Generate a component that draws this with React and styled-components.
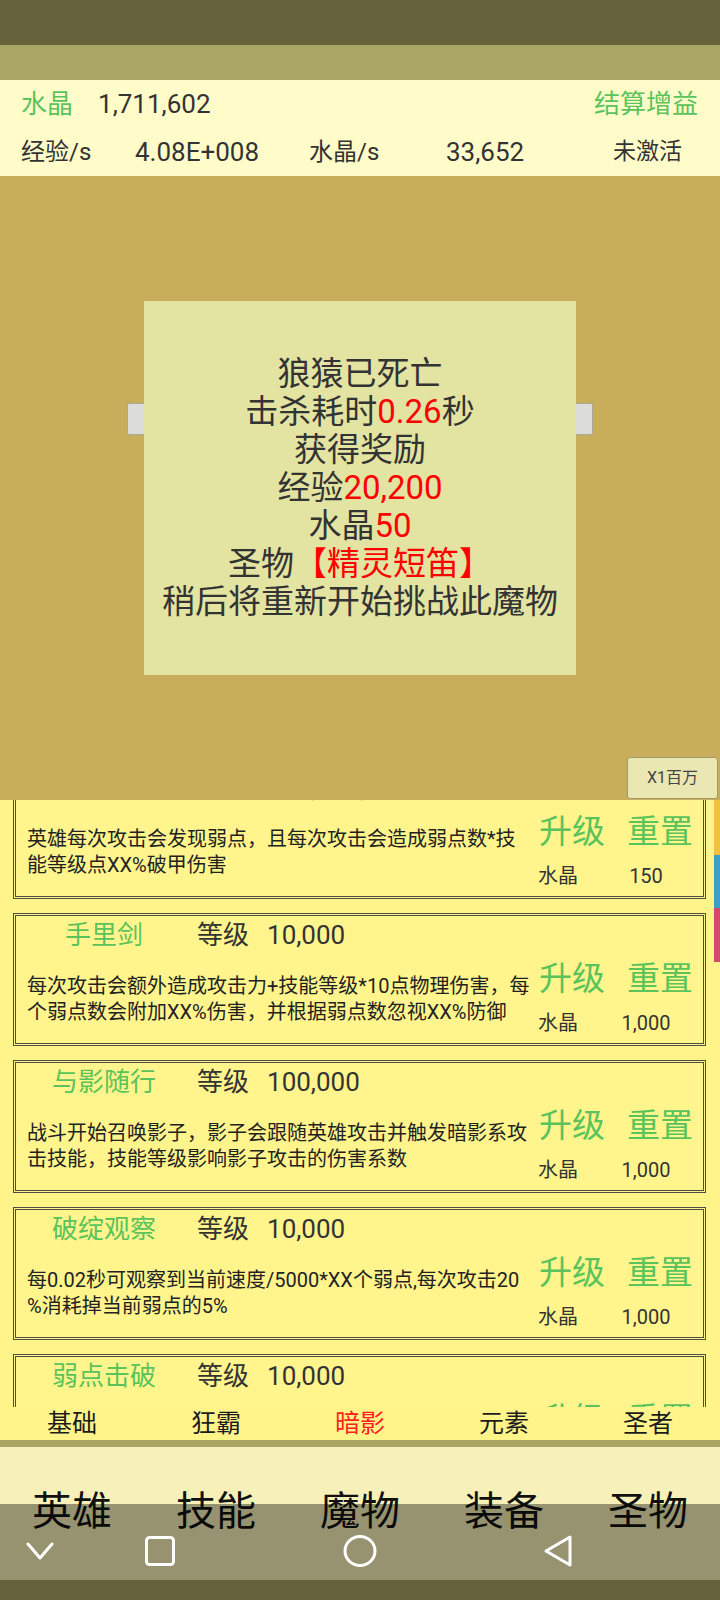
import React from "react";
import styled, { createGlobalStyle } from "styled-components";

const GlobalStyle = createGlobalStyle`
  html, body {
    margin: 0;
    padding: 0;
    background: #66633c;
  }
  body {
    font-family: Roboto, "Noto Sans CJK SC", sans-serif;
  }
  #root {
    width: 720px;
  }
`;

const skills = [
  {
    name: "弱点发现",
    level: "100,000,000",
    desc: ["英雄每次攻击会发现弱点，且每次攻击会造成弱点数*技", "能等级点XX%破甲伤害"],
    cost: "150",
  },
  {
    name: "手里剑",
    level: "10,000",
    desc: ["每次攻击会额外造成攻击力+技能等级*10点物理伤害，每", "个弱点数会附加XX%伤害，并根据弱点数忽视XX%防御"],
    cost: "1,000",
  },
  {
    name: "与影随行",
    level: "100,000",
    desc: ["战斗开始召唤影子，影子会跟随英雄攻击并触发暗影系攻", "击技能，技能等级影响影子攻击的伤害系数"],
    cost: "1,000",
  },
  {
    name: "破绽观察",
    level: "10,000",
    desc: ["每0.02秒可观察到当前速度/5000*XX个弱点,每次攻击20", "%消耗掉当前弱点的5%"],
    cost: "1,000",
  },
  {
    name: "弱点击破",
    level: "10,000",
    desc: ["弱点数达到上限时，下一次攻击会击破所有弱点，造成", "弱点数*XX%的额外伤害"],
    cost: "1,000",
  },
];

const subTabs = ["基础", "狂霸", "暗影", "元素", "圣者"];
const mainTabs = ["英雄", "技能", "魔物", "装备", "圣物"];

const App = () => {
  return (
    <Page>
      <GlobalStyle />
      <StatusBar />
      <AppBar />
      <InfoPanel>
        <InfoRow>
          <Green>水晶</Green>
          <Value>1,711,602</Value>
          <Green $right>结算增益</Green>
        </InfoRow>
        <RateRow>
          <RateText $size={24}>经验/s</RateText>
          <RateText $size={26}>4.08E+008</RateText>
          <RateText $size={24}>水晶/s</RateText>
          <RateText $size={26}>33,652</RateText>
          <RateText $size={23}>未激活</RateText>
        </RateRow>
      </InfoPanel>

      <Scene>
        <BattleBar />
        <Dialog>
          <DialogLine>狼猿已死亡</DialogLine>
          <DialogLine>击杀耗时<Red>0.26</Red>秒</DialogLine>
          <DialogLine>获得奖励</DialogLine>
          <DialogLine>经验<Red>20,200</Red></DialogLine>
          <DialogLine>水晶<Red>50</Red></DialogLine>
          <DialogLine>圣物<Red>【精灵短笛】</Red></DialogLine>
          <DialogLine>稍后将重新开始挑战此魔物</DialogLine>
        </Dialog>
        <SpeedButton>X1百万</SpeedButton>
      </Scene>

      <SkillArea>
        <CardColumn>
          {skills.map((s) => (
            <Card key={s.name}>
              <LeftCol>
                <NameRow>
                  <SkillName>{s.name}</SkillName>
                  <LevelLabel>等级</LevelLabel>
                  <LevelValue>{s.level}</LevelValue>
                </NameRow>
                <Desc>
                  {s.desc.map((line) => (
                    <div key={line}>{line}</div>
                  ))}
                </Desc>
              </LeftCol>
              <RightCol>
                <ActionRow>
                  <Action>升级</Action>
                  <Action>重置</Action>
                </ActionRow>
                <CostRow>
                  <span>水晶</span>
                  <CostValue>{s.cost}</CostValue>
                </CostRow>
              </RightCol>
            </Card>
          ))}
        </CardColumn>
        <SideStrip>
          <StripPart $h={55} $color="#f6be3e" />
          <StripPart $h={53} $color="#3c9fc9" />
          <StripPart $h={54} $color="#d2496b" />
        </SideStrip>
      </SkillArea>

      <SubTabBar>
        {subTabs.map((t) => (
          <SubTab key={t} $active={t === "暗影"}>{t}</SubTab>
        ))}
      </SubTabBar>
      <Divider />

      <BottomNav>
        <MainTabs>
          {mainTabs.map((t) => (
            <MainTab key={t}>{t}</MainTab>
          ))}
        </MainTabs>
        <SystemNav>
          <NavIcons>
            <NavIcon $offset={26} width="28" height="18" viewBox="0 0 28 18">
              <path d="M2 2 L14 16 L26 2" />
            </NavIcon>
            <NavIcon $offset={91} width="30" height="30" viewBox="0 0 30 30">
              <rect x="1.5" y="1.5" width="27" height="27" rx="3" />
            </NavIcon>
            <NavIcon $offset={168} width="34" height="32" viewBox="0 0 34 32">
              <ellipse cx="17" cy="16" rx="15" ry="14.5" />
            </NavIcon>
            <NavIcon $offset={166} width="30" height="34" viewBox="0 0 30 34">
              <path d="M27 3 L3 17 L27 31 Z" />
            </NavIcon>
          </NavIcons>
          <NavFloor />
        </SystemNav>
      </BottomNav>
    </Page>
  );
};

export default App;

const Page = styled.div`
  width: 720px;
  height: 1600px;
  overflow: hidden;
  display: flex;
  flex-direction: column;
  color: #333;
`;

const StatusBar = styled.div`
  height: 45px;
  flex-shrink: 0;
  background: #66633c;
`;

const AppBar = styled.div`
  height: 35px;
  flex-shrink: 0;
  background: #a9a665;
`;

const InfoPanel = styled.div`
  height: 96px;
  flex-shrink: 0;
  background: #fffcc9;
  font-size: 26px;
  line-height: 32px;
`;

const InfoRow = styled.div`
  height: 48px;
  display: flex;
  align-items: center;
  padding: 0 22px 0 21px;
`;

const Green = styled.span`
  color: #5bc35b;
  margin-left: ${(p) => (p.$right ? "auto" : "0")};
`;

const Value = styled.span`
  margin-left: 25px;
  color: #333;
`;

const RateRow = styled.div`
  height: 48px;
  display: grid;
  grid-template-columns: 114px 174px 137px 167px 1fr;
  align-items: center;
  padding-left: 21px;
`;

const RateText = styled.span`
  font-size: ${(p) => p.$size}px;
  line-height: 32px;
`;

const Scene = styled.div`
  position: relative;
  height: 624px;
  flex-shrink: 0;
  background: #c8ad5a;
  display: flex;
  flex-direction: column;
`;

const BattleBar = styled.div`
  box-sizing: border-box;
  margin: 227px 0 0 127px;
  width: 466px;
  height: 32px;
  background: #dcdcd8;
  border: 1px solid #a9a89c;
  border-radius: 2px;
`;

const Dialog = styled.div`
  position: absolute;
  left: 144px;
  top: 125px;
  width: 432px;
  height: 374px;
  background: #e3e3a2;
  display: flex;
  flex-direction: column;
  align-items: center;
  justify-content: center;
`;

const DialogLine = styled.div`
  font-size: 33px;
  line-height: 38px;
  color: #333;
  white-space: nowrap;
`;

const Red = styled.span`
  color: #ff0000;
`;

const SpeedButton = styled.div`
  box-sizing: border-box;
  margin: auto 2px 1px auto;
  width: 91px;
  height: 42px;
  background: #ebe7b3;
  border: 1px solid #a39b66;
  border-radius: 3px;
  display: flex;
  align-items: center;
  justify-content: center;
  font-size: 16px;
  line-height: 20px;
  color: #444;
`;

const SkillArea = styled.div`
  height: 607px;
  flex-shrink: 0;
  overflow: hidden;
  background: #fff48a;
  display: flex;
  align-items: flex-start;
`;

const CardColumn = styled.div`
  margin: -34px 0 0 13px;
  width: 693px;
`;

const Card = styled.div`
  box-sizing: border-box;
  height: 133px;
  border: 3px double #4f4e44;
  background: #fff58c;
  display: flex;
  & + & {
    margin-top: 14px;
  }
`;

const LeftCol = styled.div`
  width: 520px;
  padding-left: 11px;
  box-sizing: border-box;
`;

const NameRow = styled.div`
  display: flex;
  align-items: center;
  height: 30px;
  margin-top: 4px;
  font-size: 26px;
  line-height: 30px;
  white-space: nowrap;
`;

const SkillName = styled.span`
  margin-left: 1px;
  width: 152px;
  text-align: center;
  color: #5bc35b;
`;

const LevelLabel = styled.span`
  margin-left: 17px;
  color: #333;
`;

const LevelValue = styled.span`
  margin-left: 18px;
  color: #333;
`;

const Desc = styled.div`
  margin-top: 23px;
  font-size: 20px;
  line-height: 26px;
  color: #222;
  white-space: nowrap;
`;

const RightCol = styled.div`
  flex: 1;
  padding-top: 43px;
`;

const ActionRow = styled.div`
  display: flex;
  gap: 22px;
  padding-left: 3px;
  height: 40px;
  align-items: center;
`;

const Action = styled.span`
  font-size: 33px;
  line-height: 40px;
  color: #5bc35b;
`;

const CostRow = styled.div`
  margin-top: 11px;
  height: 26px;
  display: flex;
  align-items: center;
  padding-left: 2px;
  font-size: 20px;
  line-height: 26px;
  color: #333;
`;

const CostValue = styled.span`
  margin-left: 22px;
  width: 92px;
  text-align: center;
`;

const SideStrip = styled.div`
  margin-left: 8px;
  width: 6px;
  display: flex;
  flex-direction: column;
`;

const StripPart = styled.div`
  height: ${(p) => p.$h}px;
  background: ${(p) => p.$color};
`;

const SubTabBar = styled.div`
  height: 33px;
  flex-shrink: 0;
  background: #fff48a;
  display: grid;
  grid-template-columns: repeat(5, 144px);
  align-items: center;
`;

const SubTab = styled.div`
  text-align: center;
  font-size: 25px;
  line-height: 33px;
  color: ${(p) => (p.$active ? "#ff2020" : "#1c1c1c")};
`;

const Divider = styled.div`
  height: 7px;
  flex-shrink: 0;
  background: #a9a665;
`;

const BottomNav = styled.div`
  position: relative;
  height: 153px;
  flex-shrink: 0;
  background: #f7f1b9;
`;

const MainTabs = styled.div`
  padding-top: 43px;
  display: grid;
  grid-template-columns: repeat(5, 144px);
`;

const MainTab = styled.div`
  text-align: center;
  font-size: 40px;
  line-height: 44px;
  color: #111;
`;

const SystemNav = styled.div`
  position: absolute;
  left: 0;
  right: 0;
  bottom: 0;
  height: 96px;
  display: flex;
  flex-direction: column;
`;

const NavIcons = styled.div`
  box-sizing: border-box;
  height: 76px;
  padding-top: 18px;
  background: rgba(0, 0, 0, 0.39);
  display: flex;
  align-items: center;
`;

const NavIcon = styled.svg`
  margin-left: ${(p) => p.$offset}px;
  fill: none;
  stroke: #ffffff;
  stroke-width: 3;
  stroke-linejoin: round;
  stroke-linecap: round;
`;

const NavFloor = styled.div`
  height: 20px;
  background: #66623c;
`;
